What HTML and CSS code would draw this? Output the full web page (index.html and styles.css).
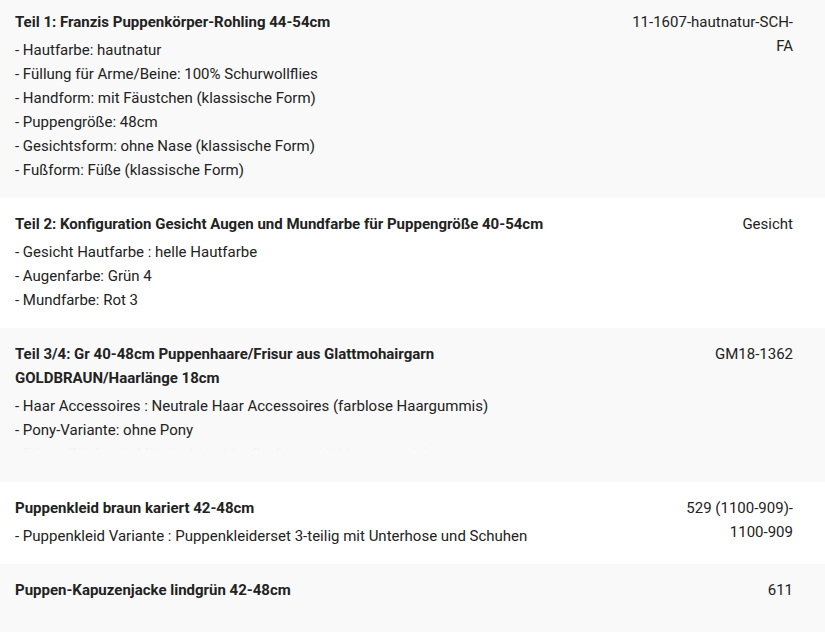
FILE: index.html
```html
<!DOCTYPE html>
<html lang="de">
<head>
<meta charset="utf-8">
<title>Bestellung</title>
<link rel="stylesheet" href="styles.css">
</head>
<body>
<div class="items">
  <div class="row gray first">
    <div class="main">
      <div class="title">Teil 1: Franzis Puppenkörper-Rohling 44-54cm</div>
      <ul class="opts">
        <li>- Hautfarbe: hautnatur</li>
        <li>- Füllung für Arme/Beine: 100% Schurwollflies</li>
        <li>- Handform: mit Fäustchen (klassische Form)</li>
        <li>- Puppengröße: 48cm</li>
        <li>- Gesichtsform: ohne Nase (klassische Form)</li>
        <li>- Fußform: Füße (klassische Form)</li>
      </ul>
    </div>
    <div class="sku">11-1607-hautnatur-SCH-FA</div>
  </div>
  <div class="row">
    <div class="main">
      <div class="title">Teil 2: Konfiguration Gesicht Augen und Mundfarbe für Puppengröße 40-54cm</div>
      <ul class="opts">
        <li>- Gesicht Hautfarbe : helle Hautfarbe</li>
        <li>- Augenfarbe: Grün 4</li>
        <li>- Mundfarbe: Rot 3</li>
      </ul>
    </div>
    <div class="sku">Gesicht</div>
  </div>
  <div class="row gray">
    <div class="main">
      <div class="title">Teil 3/4: Gr 40-48cm Puppenhaare/Frisur aus Glattmohairgarn GOLDBRAUN/Haarlänge 18cm</div>
      <ul class="opts">
        <li>- Haar Accessoires : Neutrale Haar Accessoires (farblose Haargummis)</li>
        <li>- Pony-Variante: ohne Pony</li>
        <li class="faded">- Frisur: Zöpfe mit Mittelscheitel (geflochten, mit Haargummis)</li>
      </ul>
    </div>
    <div class="sku">GM18-1362</div>
  </div>
  <div class="row">
    <div class="main">
      <div class="title">Puppenkleid braun kariert 42-48cm</div>
      <ul class="opts">
        <li>- Puppenkleid Variante : Puppenkleiderset 3-teilig mit Unterhose und Schuhen</li>
      </ul>
    </div>
    <div class="sku"><span class="nb">529 (1100-909)-</span><wbr><span class="nb">1100-909</span></div>
  </div>
  <div class="row gray">
    <div class="main">
      <div class="title">Puppen-Kapuzenjacke lindgrün 42-48cm</div>
    </div>
    <div class="sku">611</div>
  </div>
</div>
</body>
</html>
```

FILE: styles.css
```css
html, body {
  margin: 0;
  padding: 0;
  background: #ffffff;
}
body {
  font-family: Roboto, "Liberation Sans", Arial, sans-serif;
  font-size: 15px;
  line-height: 24px;
  color: #222222;
}
.items {
  display: flex;
  flex-direction: column;
  min-height: 100vh;
}
.row {
  display: grid;
  grid-template-columns: 1fr 166px;
  column-gap: 56px;
  align-content: start;
  padding: 14px 32px 16px 15px;
  background: #ffffff;
}
.row:last-child {
  flex-grow: 1;
}
.row.gray {
  background: #f9f9f9;
}
.row.first {
  padding-top: 10px;
}
.title {
  font-weight: 700;
}
.opts {
  list-style: none;
  margin: 4px 0 0 0;
  padding: 0;
}
.opts li {
  margin: 0;
}
.opts li.faded {
  position: relative;
}
.opts li.faded::after {
  content: "";
  position: absolute;
  left: 0;
  right: 0;
  top: 0;
  bottom: 0;
  background: linear-gradient(to bottom, rgba(249, 249, 249, 0.92) 0%, #f9f9f9 40%);
}
.sku {
  text-align: right;
}
.nb {
  white-space: nowrap;
}
```
